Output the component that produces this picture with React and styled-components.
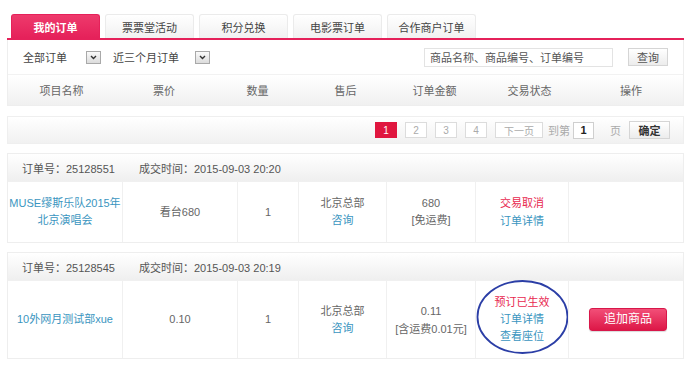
import React from 'react';
import styled, { createGlobalStyle } from 'styled-components';

const GlobalStyle = createGlobalStyle`
  body {
    margin: 0;
    background: #fff;
    font-family: "Liberation Sans", "Noto Sans CJK SC", sans-serif;
    font-size: 11px;
    color: #666;
  }
`;

const PINK = '#e5215a';
const LINK = '#3a95c0';

const Page = styled.div`
  width: 677px;
  padding: 14px 0 0 7px;
`;

const Tabs = styled.div`
  display: flex;
  gap: 5px;
  padding-left: 4px;
  border-bottom: 2px solid ${PINK};
`;

const Tab = styled.div`
  width: 89px;
  height: 24px;
  display: flex;
  align-items: center;
  justify-content: center;
  box-sizing: border-box;
  border-radius: 3px 3px 0 0;
  font-size: 11px;
  font-weight: ${p => (p.$active ? 'bold' : 'normal')};
  color: ${p => (p.$active ? '#fff' : '#444')};
  background: ${p => (p.$active ? `linear-gradient(#ee3a6c, ${PINK})` : 'linear-gradient(#fff, #f1f1f1)')};
  border: 1px solid ${p => (p.$active ? PINK : '#ebebeb')};
  border-bottom: none;
`;

const Panel = styled.div`
  border: 1px solid #eeeeee;
  border-top: none;
`;

const FilterRow = styled.div`
  height: 34px;
  display: flex;
  align-items: center;
  padding: 0 15px 0 11px;
  gap: 8px;
`;

const Select = styled.div`
  width: ${p => p.$w}px;
  height: 17px;
  box-sizing: border-box;
  display: flex;
  align-items: center;
  justify-content: space-between;
  padding-left: 4px;
  color: #444;
  background: #fff;
`;

const Arrow = styled.span`
  width: 15px;
  height: 13px;
  box-sizing: border-box;
  border: 1px solid #a9a9a9;
  background: linear-gradient(#fafafa, #dcdcdc);
  display: flex;
  align-items: center;
  justify-content: center;
`;

const Spacer = styled.div`
  flex: 1;
`;

const SearchInput = styled.div`
  width: 189px;
  height: 19px;
  box-sizing: border-box;
  border: 1px solid #e3e3e3;
  display: flex;
  align-items: center;
  padding-left: 5px;
  color: #555;
`;

const GreyButton = styled.div`
  width: ${p => p.$w}px;
  height: ${p => p.$h || 18}px;
  box-sizing: border-box;
  margin-left: ${p => p.$ml || 0}px;
  border: 1px solid #d5d5d5;
  background: linear-gradient(#fff, #ececec);
  display: flex;
  align-items: center;
  justify-content: center;
  color: ${p => p.$dark ? '#333' : '#555'};
  font-weight: ${p => p.$dark ? 'bold' : 'normal'};
`;

const HeaderRow = styled.div`
  height: 30px;
  display: grid;
  grid-template-columns: 107px 98px 89px 87px 91px 99px 1fr;
  align-items: center;
  text-align: center;
  color: #666;
  background: linear-gradient(#fff, #f0f0f0);
  border-top: 1px solid #f2f2f2;
`;

const Pager = styled.div`
  margin-top: 10px;
  height: 28px;
  box-sizing: border-box;
  border: 1px solid #efefef;
  background: linear-gradient(#fff, #f1f1f1);
  display: flex;
  align-items: center;
  justify-content: flex-end;
  padding-right: 13px;
`;

const PageNum = styled.div`
  width: ${p => p.$w || 22}px;
  height: 16px;
  box-sizing: border-box;
  margin-left: ${p => p.$ml ?? 8}px;
  border: 1px solid ${p => (p.$on ? '#e0163f' : '#dcdcdc')};
  background: ${p => (p.$on ? '#e0163f' : '#fff')};
  color: ${p => (p.$on ? '#fff' : '#aaa')};
  font-size: 10px;
  display: flex;
  align-items: center;
  justify-content: center;
`;

const PagerText = styled.span`
  color: #aaa;
  margin-left: ${p => p.$ml}px;
`;

const PageInput = styled.div`
  width: 21px;
  height: 17px;
  box-sizing: border-box;
  margin-left: 3px;
  border: 1px solid #cfcfcf;
  background: #fff;
  color: #222;
  font-weight: bold;
  display: flex;
  align-items: center;
  justify-content: center;
`;

const OrderCard = styled.div`
  margin-top: 9px;
  border: 1px solid #eeeeee;
`;

const OrderHead = styled.div`
  height: 27px;
  display: flex;
  align-items: center;
  padding-left: 14px;
  gap: 24px;
  color: #555;
  background: linear-gradient(#fff, #efefef);
`;

const OrderBody = styled.div`
  height: ${p => p.$h}px;
  display: grid;
  grid-template-columns: 114px 115px 61px 88px 89px 93px 1fr;
  border-top: 1px solid #f0f0f0;
`;

const Cell = styled.div`
  display: flex;
  flex-direction: column;
  align-items: center;
  justify-content: center;
  text-align: center;
  white-space: nowrap;
  line-height: ${p => p.$lh || 17}px;
  border-left: ${p => (p.$first ? 'none' : '1px solid #f0f0f0')};
  position: relative;
`;

const Link = styled.span`
  color: ${LINK};
`;

const Red = styled.span`
  color: #e8284f;
`;

const Ellipse = styled.svg`
  position: absolute;
  left: 0;
  top: -2px;
  pointer-events: none;
`;

const AddButton = styled.div`
  width: 76px;
  height: 21px;
  border-radius: 3px;
  background: linear-gradient(#f24f78, #dd1747);
  border: 1px solid #d8174a;
  color: #fff;
  font-size: 12px;
  display: flex;
  align-items: center;
  justify-content: center;
  box-shadow: 0 1px 1px rgba(0,0,0,0.15);
  margin-left: 4px;
`;

const ArrowIcon = () => (
  <svg width="7" height="5" viewBox="0 0 7 5">
    <path d="M1 1 L3.5 3.5 L6 1" stroke="#333" strokeWidth="1.4" fill="none" />
  </svg>
);

const tabs = ['我的订单', '票票堂活动', '积分兑换', '电影票订单', '合作商户订单'];
const heads = ['项目名称', '票价', '数量', '售后', '订单金额', '交易状态', '操作'];

export default function App() {
  return (
    <Page>
      <GlobalStyle />
      <Tabs>
        {tabs.map((t, i) => (
          <Tab key={t} $active={i === 0}>{t}</Tab>
        ))}
      </Tabs>
      <Panel>
        <FilterRow>
          <Select $w={82}>全部订单<Arrow><ArrowIcon /></Arrow></Select>
          <Select $w={101}>近三个月订单<Arrow><ArrowIcon /></Arrow></Select>
          <Spacer />
          <SearchInput>商品名称、商品编号、订单编号</SearchInput>
          <GreyButton $w={40} $ml={7}>查询</GreyButton>
        </FilterRow>
        <HeaderRow>
          {heads.map(h => <div key={h}>{h}</div>)}
        </HeaderRow>
      </Panel>

      <Pager>
        <PageNum $on>1</PageNum>
        <PageNum>2</PageNum>
        <PageNum>3</PageNum>
        <PageNum>4</PageNum>
        <PageNum $w={48}>下一页</PageNum>
        <PagerText $ml={5}>到第</PagerText>
        <PageInput>1</PageInput>
        <PagerText $ml={16}>页</PagerText>
        <GreyButton $w={41} $ml={8} $dark>确定</GreyButton>
      </Pager>

      <OrderCard>
        <OrderHead>
          <span>订单号：25128551</span>
          <span>成交时间：2015-09-03 20:20</span>
        </OrderHead>
        <OrderBody $h={60}>
          <Cell $first><Link>MUSE缪斯乐队2015年</Link><Link>北京演唱会</Link></Cell>
          <Cell>看台680</Cell>
          <Cell>1</Cell>
          <Cell>北京总部<Link>咨询</Link></Cell>
          <Cell>680<span>[免运费]</span></Cell>
          <Cell $lh={18}><Red>交易取消</Red><Link>订单详情</Link></Cell>
          <Cell />
        </OrderBody>
      </OrderCard>

      <OrderCard>
        <OrderHead>
          <span>订单号：25128545</span>
          <span>成交时间：2015-09-03 20:19</span>
        </OrderHead>
        <OrderBody $h={77}>
          <Cell $first><Link>10外网月测试部xue</Link></Cell>
          <Cell>0.10</Cell>
          <Cell>1</Cell>
          <Cell>北京总部<Link>咨询</Link></Cell>
          <Cell $lh={18}>0.11<span>[含运费0.01元]</span></Cell>
          <Cell>
            <Red>预订已生效</Red>
            <Link>订单详情</Link>
            <Link>查看座位</Link>
            <Ellipse width="93" height="76" viewBox="0 0 93 76">
              <ellipse cx="46.5" cy="38" rx="45" ry="36" fill="none" stroke="#2b3ea6" strokeWidth="1.8" />
            </Ellipse>
          </Cell>
          <Cell><AddButton>追加商品</AddButton></Cell>
        </OrderBody>
      </OrderCard>
    </Page>
  );
}
